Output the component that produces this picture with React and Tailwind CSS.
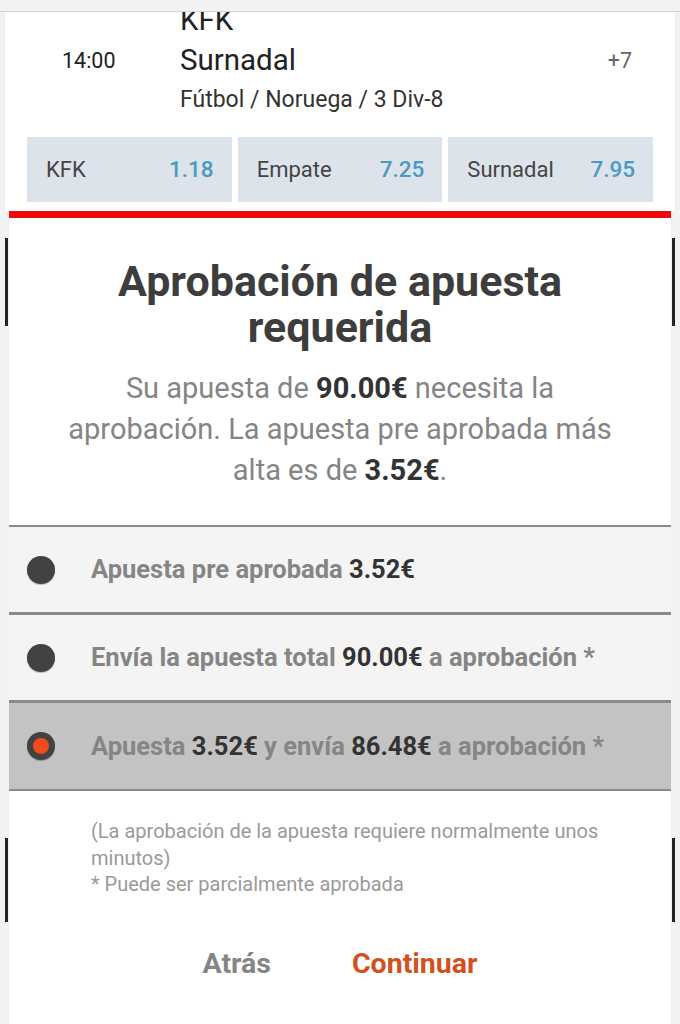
import React from "react";

const odds = [
  { label: "KFK", value: "1.18" },
  { label: "Empate", value: "7.25" },
  { label: "Surnadal", value: "7.95" },
];

const options = [
  {
    id: 1,
    parts: [["Apuesta pre aprobada ", false], ["3.52€", true]],
  },
  {
    id: 2,
    parts: [["Envía la apuesta total ", false], ["90.00€", true], [" a aprobación *", false]],
  },
  {
    id: 3,
    parts: [
      ["Apuesta ", false],
      ["3.52€", true],
      [" y envía ", false],
      ["86.48€", true],
      [" a aprobación *", false],
    ],
  },
];

const Radio = ({ checked }) => (
  <div className="w-7 h-7 rounded-full bg-[#424242] flex items-center justify-center shrink-0 shadow-[0_1px_1px_rgba(0,0,0,0.25)]">
    {checked && <div className="w-4 h-4 rounded-full bg-[#f04b1a]" />}
  </div>
);

const Gutter = ({ side }) => (
  <div className={`w-[9px] shrink-0 flex flex-col ${side === "left" ? "items-start pl-[5px]" : "items-end pr-[5px]"}`}>
    <div className="mt-[20px] w-[3px] h-[88px] bg-[#222]" />
    <div className="mt-[512px] w-[3px] h-[84px] bg-[#222]" />
  </div>
);

export default function App() {
  const selected = 3;

  return (
    <div className="relative h-[1024px] overflow-hidden bg-[#f2f2f2] font-['Roboto',sans-serif]">
      {/* app bar edge lying over the scrolled list */}
      <div className="absolute top-0 left-0 right-0 h-[12px] bg-[#f2f2f2] border-b border-[#d6d6d6] z-10" />

      <div className="mx-[5px] bg-white pb-[9px]">
        <div className="flex">
          <div className="w-[175px] pl-[57px] pt-[40px]">
            <span className="block text-[21.5px] leading-[42px] text-[#222]">14:00</span>
          </div>
          <div className="flex-1">
            <div className="text-[29.5px] leading-[40px] text-[#222]">KFK</div>
            <div className="text-[29.5px] leading-[40px] text-[#222]">Surnadal</div>
            <div className="text-[23px] leading-[40px] text-[#333]">Fútbol / Noruega / 3 Div-8</div>
          </div>
          <div className="pr-[43px] pt-[40px]">
            <span className="block text-[21.5px] leading-[42px] text-[#666]">+7</span>
          </div>
        </div>

        <div className="mt-[17px] px-[22px] grid grid-cols-3 gap-[6px]">
          {odds.map((o) => (
            <div key={o.label} className="h-[65px] bg-[#dde3ea] flex items-center justify-between pl-[19px] pr-[18px]">
              <span className="text-[22px] text-[#444]">{o.label}</span>
              <span className="text-[22.5px] font-medium text-[#4a99c4]">{o.value}</span>
            </div>
          ))}
        </div>
      </div>

      <div className="mx-[9px] h-[7px] bg-[#ee0a0a]" />

      <div className="flex">
        <Gutter side="left" />

        <div className="flex-1 bg-white h-[806px]">
          <h1 className="pt-[40px] text-center text-[43px] leading-[46px] font-bold text-[#3d3d3d]">
            Aprobación de apuesta
            <br />
            requerida
          </h1>

          <p className="mt-[18px] text-center text-[29px] leading-[41px] text-[#858585]">
            Su apuesta de <b className="font-bold text-[#333]">90.00€</b> necesita la
            <br />
            aprobación. La apuesta pre aprobada más
            <br />
            alta es de <b className="font-bold text-[#333]">3.52€</b>.
          </p>

          <div className="mt-[34px] border-t-2 border-[#8a8a8a]">
            {options.map((opt, i) => (
              <div
                key={opt.id}
                className={`flex items-center pl-[18px] h-[88px] ${i < options.length - 1 ? "border-b-[3px]" : "border-b-2"} border-[#8a8a8a] ${
                  selected === opt.id ? "bg-[#c3c3c3]" : "bg-[#f4f4f4]"
                }`}
              >
                <Radio checked={selected === opt.id} />
                <span className="ml-[36px] text-[25.5px] font-bold text-[#858585]">
                  {opt.parts.map(([t, strong], k) =>
                    strong ? (
                      <span key={k} className="text-[#333]">{t}</span>
                    ) : (
                      <span key={k}>{t}</span>
                    )
                  )}
                </span>
              </div>
            ))}
          </div>

          <div className="mt-[27px] pl-[82px] text-[20px] leading-[26.5px] text-[#9a9a9a]">
            (La aprobación de la apuesta requiere normalmente unos
            <br />
            minutos)
            <br />* Puede ser parcialmente aprobada
          </div>

          <div className="mt-[46px] flex justify-center gap-[81px] text-[28.5px] font-bold leading-[40px]">
            <button className="text-[#858585]">Atrás</button>
            <button className="text-[#d4501e]">Continuar</button>
          </div>
        </div>

        <Gutter side="right" />
      </div>
    </div>
  );
}
